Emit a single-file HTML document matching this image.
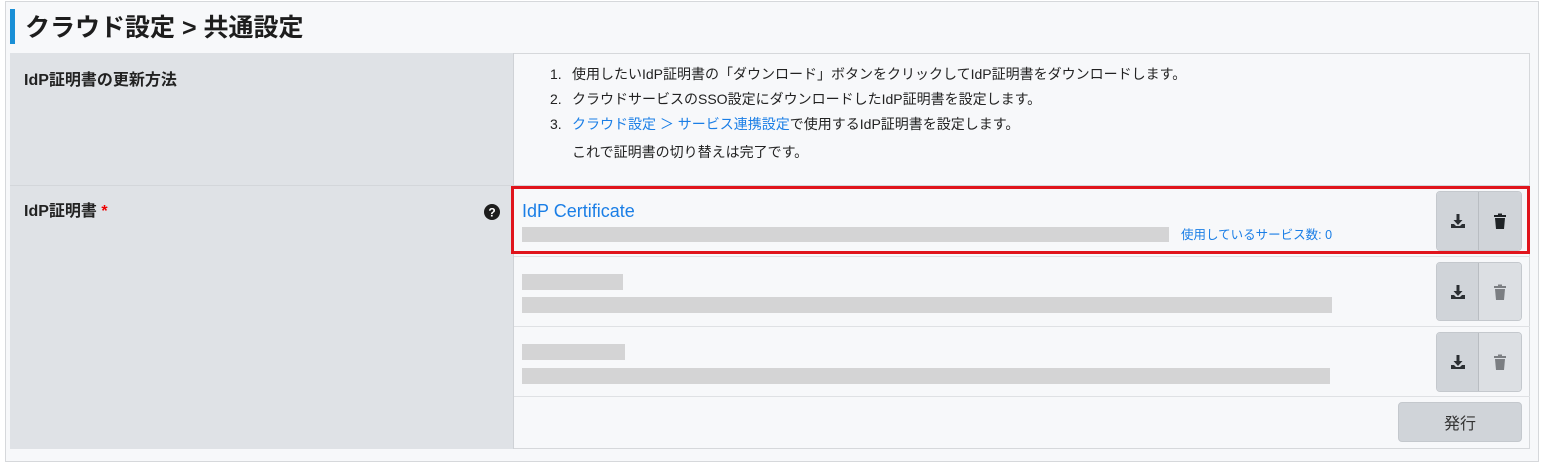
<!DOCTYPE html>
<html><head><meta charset="utf-8"><style>
*{margin:0;padding:0;box-sizing:border-box}
body{width:1544px;height:463px;background:#fff;font-family:"Liberation Sans","Noto Sans CJK JP",sans-serif;color:#222;position:relative;overflow:hidden}
.a{position:absolute}
.bar{position:absolute;background:#d4d4d5}
.btn{position:absolute;border:1px solid #c4c8cd;border-radius:4px;display:flex;overflow:hidden}
.btn div{width:43px;height:100%;display:flex;align-items:center;justify-content:center}
.dl{background:#d0d4d9;border-right:1px solid #b9bdc2}
.del{background:#dcdfe3}
.del.on{background:#d0d4d9}
.li{position:relative;padding-left:24px}
.li b{position:absolute;left:2px;font-weight:normal}
</style></head><body>
<div class="a" style="left:5px;top:1px;width:1534px;height:461px;border:1px solid #d6d8db;background:#f7f8fa"></div>
<div class="a" style="left:10px;top:9px;width:5px;height:35px;background:#1a8fd6"></div>
<div class="a" style="left:25px;top:11px;font-size:25px;font-weight:bold;color:#1d1d1d;line-height:34px">クラウド設定 &gt; 共通設定</div>
<div class="a" style="left:10px;top:53px;width:1520px;height:396px;border:1px solid #d6d8db;background:#f7f8fa"></div>
<div class="a" style="left:10px;top:53px;width:504px;height:396px;background:#dfe2e6;border-right:1px solid #cfd2d6"></div>
<div class="a" style="left:10px;top:185px;width:1520px;height:1px;background:#d3d6da"></div>
<div class="a" style="left:24px;top:70px;font-size:16px;font-weight:bold;line-height:22px">IdP証明書の更新方法</div>
<div class="a" style="left:24px;top:201px;font-size:16px;font-weight:bold;line-height:22px">IdP証明書 <span style="color:#e00">*</span></div>
<svg class="a" style="left:484px;top:204px" width="16" height="16" viewBox="0 0 16 16"><circle cx="8" cy="8" r="8" fill="#1d1d1d"/><text x="8" y="12.5" text-anchor="middle" font-size="12" font-weight="bold" fill="#fff" font-family="Liberation Sans">?</text></svg>
<div class="a" style="left:548px;top:62px;font-size:14px;line-height:25px;color:#222;white-space:nowrap">
<div class="li"><b>1.</b>使用したいIdP証明書の「ダウンロード」ボタンをクリックしてIdP証明書をダウンロードします。</div>
<div class="li"><b>2.</b>クラウドサービスのSSO設定にダウンロードしたIdP証明書を設定します。</div>
<div class="li"><b>3.</b><span style="color:#1a7ee6">クラウド設定 ＞ サービス連携設定</span>で使用するIdP証明書を設定します。</div>
<div class="li" style="margin-top:3px">これで証明書の切り替えは完了です。</div>
</div>
<div class="a" style="left:514px;top:256px;width:1016px;height:1px;background:#dfe1e4"></div>
<div class="a" style="left:514px;top:326px;width:1016px;height:1px;background:#dfe1e4"></div>
<div class="a" style="left:514px;top:396px;width:1016px;height:1px;background:#dfe1e4"></div>
<div class="a" style="left:511px;top:186px;width:1019px;height:68px;border:3px solid #e0141c"></div>
<div class="a" style="left:522px;top:200px;font-size:18px;color:#1a7ee6;line-height:22px">IdP Certificate</div>
<div class="bar" style="left:522px;top:227px;width:647px;height:15px"></div>
<div class="a" style="left:1181px;top:226px;font-size:12.5px;color:#1a7ee6;line-height:18px">使用しているサービス数: 0</div>
<div class="bar" style="left:522px;top:274px;width:101px;height:16px"></div>
<div class="bar" style="left:522px;top:297px;width:810px;height:16px"></div>
<div class="bar" style="left:522px;top:344px;width:103px;height:16px"></div>
<div class="bar" style="left:522px;top:368px;width:808px;height:16px"></div>
<svg width="0" height="0" style="position:absolute"><defs>
<g id="dli"><path d="M6.5 1h3v6h3l-4.5 5-4.5-5h3z" fill="#2b2f33"/><path d="M1 11h3l2 2h4l2-2h3v4H1z" fill="#2b2f33"/></g>
<g id="tr"><rect x="2" y="2" width="12" height="2" fill="currentColor"/><rect x="6" y="0.5" width="4" height="2" fill="currentColor"/><path d="M3 5h10l-1 11H4z" fill="currentColor"/></g>
</defs></svg>
<div class="btn" style="left:1436px;top:191px;width:86px;height:60px"><div class="dl"><svg width="16" height="16"><use href="#dli"/></svg></div><div class="del on"><svg width="16" height="16" style="color:#1f2326"><use href="#tr"/></svg></div></div>
<div class="btn" style="left:1436px;top:262px;width:86px;height:59px"><div class="dl"><svg width="16" height="16"><use href="#dli"/></svg></div><div class="del"><svg width="16" height="16" style="color:#7b7e82"><use href="#tr"/></svg></div></div>
<div class="btn" style="left:1436px;top:332px;width:86px;height:60px"><div class="dl"><svg width="16" height="16"><use href="#dli"/></svg></div><div class="del"><svg width="16" height="16" style="color:#7b7e82"><use href="#tr"/></svg></div></div>
<div class="a" style="left:1398px;top:402px;width:124px;height:40px;background:#d0d4d9;border:1px solid #c4c8cd;border-radius:4px;font-size:16px;color:#333;display:flex;align-items:center;justify-content:center">発行</div>
</body></html>
